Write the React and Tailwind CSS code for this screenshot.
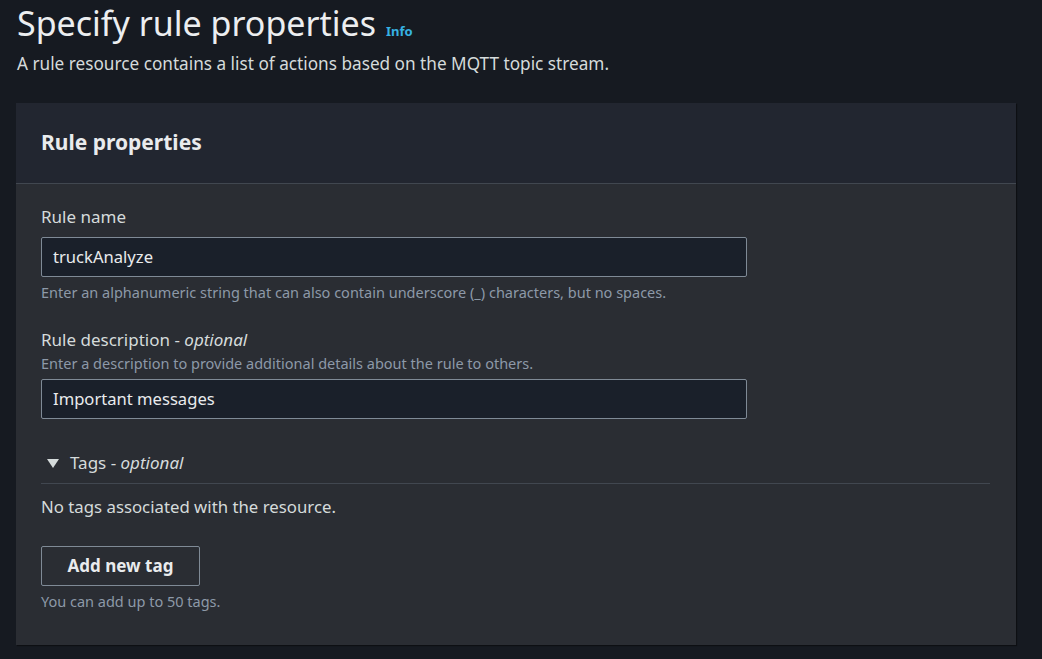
import React from 'react';

export default function App() {
    return (
        <div className="min-h-[659px] w-full bg-[#161a21] text-[#d1d5db] font-['Noto_Sans',sans-serif]">
            <div className="pl-[17px] pr-[26px]">
                <div className="flex items-baseline gap-[10px]">
                    <h1 className="text-[34px] leading-[46px] text-[#eceef0]">Specify rule properties</h1>
                    <a className="text-[13px] font-bold text-[#36b2e2]">Info</a>
                </div>
                <p className="mt-[6px] text-[17.2px] leading-[24px] text-[#d5dbdb]">
                    A rule resource contains a list of actions based on the MQTT topic stream.
                </p>
            </div>

            <div className="ml-[16px] mt-[27px] w-[1000px] bg-[#2a2d33] shadow-[1px_1px_1px_rgba(0,0,0,0.4)]">
                <div className="h-[81px] flex items-center px-[25px] bg-[#222630] border-b border-[#414750]">
                    <h2 className="text-[21px] font-bold text-[#e9ebed]">Rule properties</h2>
                </div>

                <div className="pl-[25px] pr-[26px] pt-[21px] pb-[34px]">
                    <label className="block text-[17px] leading-[24px] text-[#d5dbdb]">Rule name</label>
                    <div className="mt-[8px] w-[706px] h-[40px] flex items-center px-[11px] bg-[#1a202a] border border-[#7f8a96] rounded-[2px] text-[16.6px] text-[#e9ebed]">
                        truckAnalyze
                    </div>
                    <p className="mt-[5px] text-[14.5px] leading-[20px] text-[#8d99a8]">
                        Enter an alphanumeric string that can also contain underscore (_) characters, but no spaces.
                    </p>

                    <label className="block mt-[26px] text-[17px] leading-[24px] text-[#d5dbdb]">
                        Rule description - <i>optional</i>
                    </label>
                    <p className="mt-[1px] text-[14.5px] leading-[20px] text-[#8d99a8]">
                        Enter a description to provide additional details about the rule to others.
                    </p>
                    <div className="mt-[6px] w-[706px] h-[40px] flex items-center px-[11px] bg-[#1a202a] border border-[#7f8a96] rounded-[2px] text-[16.6px] text-[#e9ebed]">
                        Important messages
                    </div>

                    <div className="mt-[32px] flex items-center gap-[11px] pl-[6px] h-[24px] text-[17px] text-[#d5dbdb]">
                        <svg width="12" height="9" viewBox="0 0 12 9">
                            <path d="M0 0 H12 L6 9 Z" fill="#d5dbdb" />
                        </svg>
                        <span>Tags - <i>optional</i></span>
                    </div>
                    <div className="mt-[8px] h-[1px] bg-[#414750]" />

                    <p className="mt-[11px] text-[16.8px] leading-[24px] text-[#d5dbdb]">
                        No tags associated with the resource.
                    </p>

                    <button className="mt-[27px] w-[159px] h-[40px] border border-[#7f8a96] rounded-[2px] text-[17px] font-bold text-[#e9ebed]">
                        Add new tag
                    </button>
                    <p className="mt-[5px] text-[14.5px] leading-[20px] text-[#8d99a8]">You can add up to 50 tags.</p>
                </div>
            </div>
        </div>
    );
}
